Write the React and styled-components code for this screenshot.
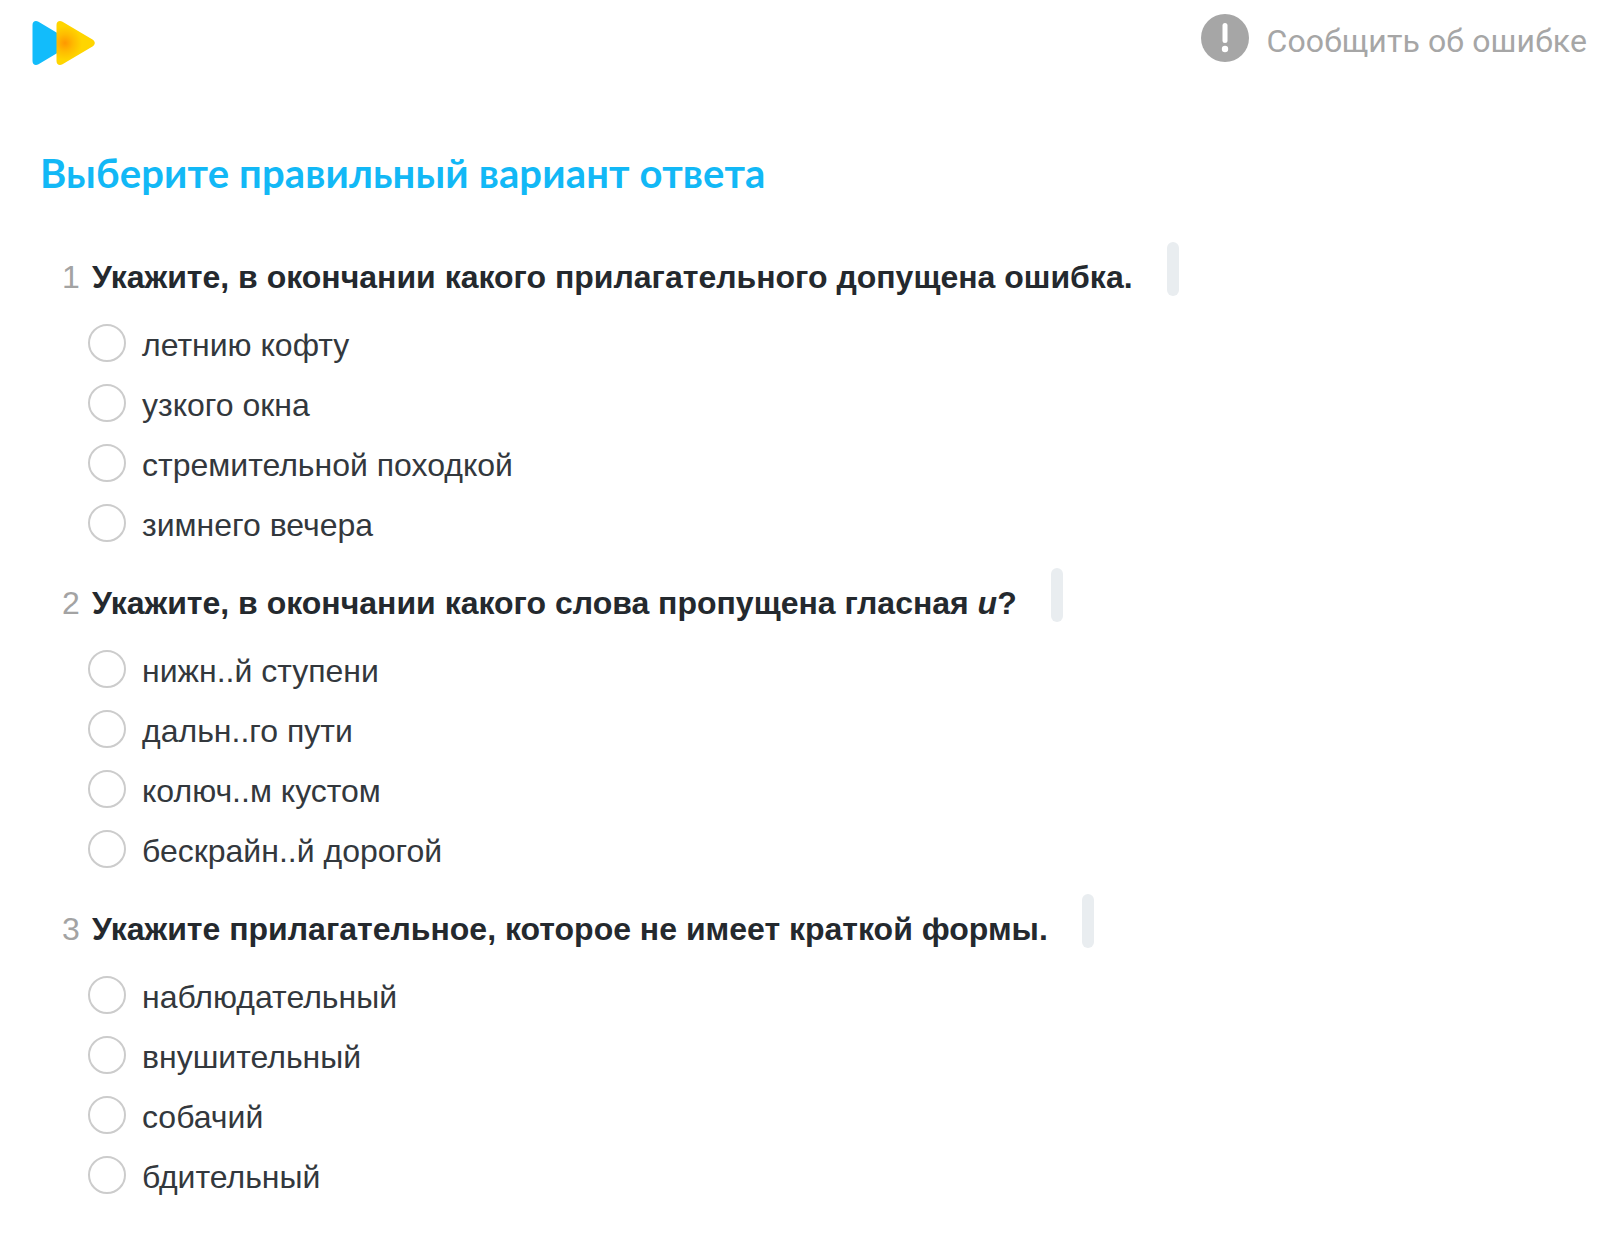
import React from 'react';
import styled, { createGlobalStyle } from 'styled-components';

const questions = [
  {
    text: <>Укажите, в окончании какого прилагательного допущена ошибка.</>,
    options: ['летнию кофту', 'узкого окна', 'стремительной походкой', 'зимнего вечера'],
  },
  {
    text: <>Укажите, в окончании какого слова пропущена гласная <em>и</em>?</>,
    options: ['нижн..й ступени', 'дальн..го пути', 'колюч..м кустом', 'бескрайн..й дорогой'],
  },
  {
    text: <>Укажите прилагательное, которое не имеет краткой формы.</>,
    options: ['наблюдательный', 'внушительный', 'собачий', 'бдительный'],
  },
];

function Logo() {
  return (
    <svg width="66" height="46" viewBox="0 0 66 46">
      <defs>
        <radialGradient id="glow" cx="33" cy="23" r="17" gradientUnits="userSpaceOnUse">
          <stop offset="0" stopColor="#ff9800" />
          <stop offset="0.5" stopColor="#ffbb00" />
          <stop offset="1" stopColor="#ffd500" />
        </radialGradient>
      </defs>
      <path
        d="M0.500 5C0.500 1.500 3.500 0 6.500 1.800L32 17v12L6.500 44.200C3.500 46 0.500 44.500 0.500 41Z"
        fill="#12bcfb"
      />
      <path
        d="M24.500 5C24.500 1.500 27.500 0 30.500 1.800L60.500 19.500C63.500 21.500 63.500 24.500 60.500 26.500L30.500 44.200C27.500 46 24.500 44.500 24.500 41Z"
        fill="url(#glow)"
      />
    </svg>
  );
}

function AlertIcon() {
  return (
    <svg width="48" height="48" viewBox="0 0 48 48">
      <circle cx="24" cy="24" r="24" fill="#a6a6a6" />
      <rect x="21.500" y="9" width="5" height="20" rx="2.500" fill="#fff" />
      <circle cx="24" cy="35" r="3.200" fill="#fff" />
    </svg>
  );
}

function App() {
  return (
    <Page>
      <GlobalStyle />
      <Header>
        <LogoSlot>
          <Logo />
        </LogoSlot>
        <Report>
          <AlertIcon />
          <ReportText>Сообщить об ошибке</ReportText>
        </Report>
      </Header>
      <Title>Выберите правильный вариант ответа</Title>
      <QuestionList>
        {questions.map((q, i) => (
          <Question key={i}>
            <QuestionRow>
              <Num>{i + 1}</Num>
              <QuestionText>{q.text}</QuestionText>
              <Handle />
            </QuestionRow>
            <Options>
              {q.options.map((o) => (
                <Option key={o}>
                  <Radio />
                  <OptionText>{o}</OptionText>
                </Option>
              ))}
            </Options>
          </Question>
        ))}
      </QuestionList>
    </Page>
  );
}

const GlobalStyle = createGlobalStyle`
  body {
    margin: 0;
    background: #fff;
    font-family: "Liberation Sans", Arial, sans-serif;
  }
`;

const Page = styled.div`
  width: 1620px;
  height: 1245px;
  overflow: hidden;
`;

const Header = styled.header`
  display: flex;
  justify-content: space-between;
  align-items: flex-start;
  padding: 14px 33px 0 32px;
  height: 62px;
`;

const LogoSlot = styled.div`
  padding-top: 6px;
`;

const Report = styled.div`
  display: flex;
  align-items: flex-start;
  gap: 17px;
`;

const ReportText = styled.span`
  padding-top: 3px;
  font-family: "Roboto", sans-serif;
  font-size: 32px;
  letter-spacing: 0.12px;
  line-height: 48px;
  color: #a6a6a6;
`;

const Title = styled.h1`
  margin: 74px 0 0 40px;
  font-family: "Lato", sans-serif;
  font-size: 40px;
  letter-spacing: 0.15px;
  line-height: 46px;
  font-weight: 700;
  color: #12b8f6;
`;

const QuestionList = styled.div`
  margin-top: 46px;
  padding-left: 62px;
`;

const Question = styled.section`
  height: 326px;
`;

const QuestionRow = styled.div`
  display: flex;
  align-items: flex-start;
  height: 54px;
`;

const Num = styled.span`
  width: 30px;
  font-size: 32px;
  line-height: 70px;
  color: #a3a3a3;
`;

const QuestionText = styled.h2`
  margin: 0;
  font-size: 32px;
  line-height: 70px;
  font-weight: 700;
  color: #24292e;
  em {
    font-style: italic;
  }
`;

const Handle = styled.span`
  width: 12px;
  height: 54px;
  margin-left: 34px;
  border-radius: 6px;
  background: #e9edf0;
`;

const Options = styled.ul`
  list-style: none;
  margin: 19px 0 0 26px;
  padding: 0;
`;

const Option = styled.li`
  display: flex;
  align-items: center;
  gap: 16px;
  height: 60px;
`;

const Radio = styled.span`
  box-sizing: border-box;
  width: 38px;
  height: 38px;
  margin-top: -4px;
  border: 2px solid #cccccc;
  border-radius: 50%;
  background: #fff;
`;

const OptionText = styled.span`
  font-size: 32px;
  color: #33383d;
`;

export default App;
